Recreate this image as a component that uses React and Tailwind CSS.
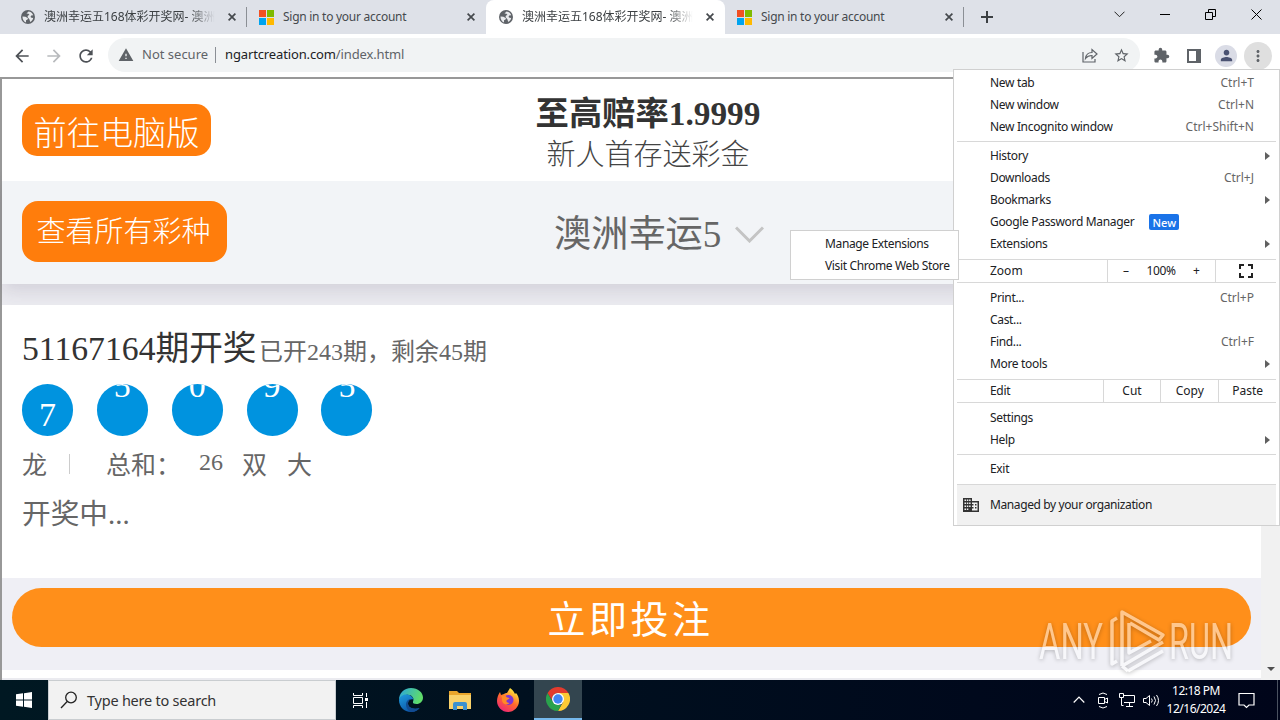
import React from 'react';
import { MdStarBorder, MdExtension, MdPerson, MdMoreVert, MdWarning, MdArrowBack, MdArrowForward, MdRefresh } from 'react-icons/md';

const tabs = [
  { title: '澳洲幸运五168体彩开奖网- 澳洲幸运', icon: 'globe', divider: true },
  { title: 'Sign in to your account', icon: 'ms' },
  { title: '澳洲幸运五168体彩开奖网- 澳洲幸运', icon: 'globe', active: true },
  { title: 'Sign in to your account', icon: 'ms', divider: true },
];

const balls = ['7', '5', '0', '9', '5'];

const GlobeIcon = () => (
  <svg className="h-[14px] w-[14px]" viewBox="0 0 14 14">
    <circle cx="7" cy="7" r="7" fill="#5f6368" />
    <path d="M1.500 6.500l3 .2 2.500 1.500-.5 1.300-1.500.8v2.200C3 11.700 1.300 9.500 1.500 6.500z" fill="#e8eaed" />
    <path d="M7.500 1.500c2 .2 4 1.500 4.700 3.800l-2 .2-.7 1.500 1.500 1 1.200-.2c-.2 2-1.500 3.500-3 4.200l-.7-2.500-2-2.500.5-1.500 1.500-.5-1-1.200-2-.3 1-1z" fill="#e8eaed" />
  </svg>
);

const MicrosoftIcon = () => (
  <div className="grid h-[15px] w-[15px] shrink-0 grid-cols-2 gap-px">
    <span className="bg-[#f25022]" />
    <span className="bg-[#7fba00]" />
    <span className="bg-[#00a4ef]" />
    <span className="bg-[#ffb900]" />
  </div>
);

const CloseIcon = () => (
  <svg className="h-2 w-2 shrink-0" viewBox="0 0 8 8" stroke="#45494d" strokeWidth="1.7">
    <path d="M.6.6l6.8 6.8M7.4.6L.6 7.4" />
  </svg>
);

const Tab = ({ tab }) => (
  <div
    className={`relative flex h-[34px] w-[239px] shrink-0 items-center ${
      tab.active ? 'rounded-t-lg bg-white' : ''
    }`}
  >
    <div className="ml-[11px] flex w-[17px] shrink-0 justify-center">
      {tab.icon === 'globe' ? <GlobeIcon /> : <MicrosoftIcon />}
    </div>
    {tab.icon === 'globe' ? (
      <span className="ml-[8px] w-[171px] overflow-hidden text-[12px] whitespace-nowrap text-[#3c4043] [mask-image:linear-gradient(to_right,black_85%,transparent)]">
        {tab.title}
      </span>
    ) : (
      <span className="ml-[8px] w-[171px] text-[12px] tracking-[-0.270px] whitespace-nowrap text-[#45494d]">
        {tab.title}
      </span>
    )}
    <div className="ml-[13px]">
      <CloseIcon />
    </div>
    {tab.divider && <span className="absolute top-[7px] right-0 h-5 w-px bg-[#8b8f95]" />}
  </div>
);

const TabStrip = () => (
  <div className="flex h-[34px] items-center bg-[#dee1e8] pl-[8px]">
    {tabs.map((tab, i) => (
      <Tab key={i} tab={tab} />
    ))}
    <svg className="ml-[17px] h-3 w-3" viewBox="0 0 12 12" stroke="#3c4043" strokeWidth="2">
      <path d="M6 0v12M0 6h12" />
    </svg>
    <svg className="mb-1.5 ml-[121px] h-[7px] w-[11px]" viewBox="0 0 11 7" fill="none" stroke="#222">
      <path d="M.5.7l5 5 5-5" />
    </svg>
    <span className="mb-1.5 ml-[35px] h-px w-[10px] bg-black" />
    <svg className="mb-1.5 ml-[35px] h-[11px] w-[11px]" viewBox="0 0 11 11" fill="none" stroke="#000">
      <path d="M.5 3.500h7v7h-7zM3.500 3V.5h7v7H8" />
    </svg>
    <svg className="mb-1.5 ml-[35px] h-[11px] w-[11px]" viewBox="0 0 11 11" stroke="#000">
      <path d="M.5.5l10 10M10.500.5l-10 10" />
    </svg>
  </div>
);

const Toolbar = () => (
  <div className="flex h-[43px] items-center bg-white">
    <MdArrowBack className="ml-[12px] h-5 w-5 text-[#4d5156]" />
    <MdArrowForward className="ml-[12px] h-5 w-5 text-[#b8babd]" />
    <MdRefresh className="ml-[12px] h-5 w-5 text-[#4d5156]" />
    <div className="mb-px ml-[12px] flex h-[34px] w-[1032px] items-center rounded-full bg-[#f1f3f4]">
      <MdWarning className="ml-[10px] h-4 w-4 text-[#5f6368]" />
      <span className="ml-[8px] w-[73px] text-[13px] whitespace-nowrap text-[#5f6368]">Not secure</span>
      <span className="h-4 w-px bg-[#8b8f95]" />
      <span className="ml-[9px] text-[13px] tracking-[-0.130px] whitespace-nowrap text-[#5f6368]">
        <span className="text-[#202124]">ngartcreation.com</span>/index.html
      </span>
      <svg className="ml-auto h-[15px] w-[16px]" viewBox="0 0 16 15" fill="none" stroke="#5f6368" strokeWidth="1.2">
        <path d="M1 4v10h12v-3M3.500 10.500c.5-4 3-6 6.500-6V1.500l5 4.500-5 4.500V7.500c-3 0-5 1-6.500 3z" />
      </svg>
      <MdStarBorder className="mr-[10px] ml-[15px] h-[17px] w-[17px] text-[#5f6368]" />
    </div>
    <MdExtension className="ml-[13px] h-[17px] w-[17px] text-[#5f6368]" />
    <svg className="ml-[17px] h-[14px] w-[14px]" viewBox="0 0 14 14">
      <path d="M1 1h12v12H1z" fill="none" stroke="#5f6368" strokeWidth="2" />
      <path d="M9 0h5v14H9z" fill="#5f6368" />
    </svg>
    <div className="ml-[14px] flex h-[22px] w-[22px] items-center justify-center rounded-full bg-[#dadce6]">
      <MdPerson className="h-[17px] w-[17px] text-[#4a5272]" />
    </div>
    <div className="ml-[7px] flex h-7 w-7 items-center justify-center rounded-full bg-[#dfdfdf]">
      <MdMoreVert className="h-[18px] w-[18px] text-[#5f6368]" />
    </div>
  </div>
);

const Page = () => (
  <div className="flex h-[603px] border-t-2 border-l-2 border-[#989898] font-['Liberation_Serif','Noto_Sans_CJK_SC',serif]">
    <div className="flex w-[1259px] shrink-0 flex-col bg-[#ebebf0]">
      {/* Promo header */}
      <div className="relative z-20 flex h-[102px] shrink-0 items-center bg-white pl-[20px] whitespace-nowrap">
        <div className="flex h-[52px] w-[189px] items-center justify-center rounded-[15px] bg-[#ff7d0c] pt-[7px] text-[33.200px] font-light text-white">
          前往电脑版
        </div>
        <div className="ml-[315px] flex w-[244px] flex-col items-center pt-[7px]">
          <span className="text-[33.300px] leading-[42px] font-bold text-[#333]">至高赔率1.9999</span>
          <span className="text-[29px] leading-[40px] font-light text-[#444]">新人首存送彩金</span>
        </div>
      </div>

      {/* Lottery selector */}
      <div className="z-10 flex h-[103px] shrink-0 items-center bg-[#f2f4f7] pl-[20px] whitespace-nowrap shadow-[0_6px_18px_rgba(60,50,80,0.15)]">
        <div className="mb-[2px] flex h-[61px] w-[205px] items-center justify-center rounded-[16px] bg-[#ff7d0c] pt-[2px] pr-[2px] text-[29px] font-light text-white">
          查看所有彩种
        </div>
        <span className="mt-[4px] ml-[327px] w-[168px] text-[37.200px] text-[#666]">澳洲幸运5</span>
        <svg className="mt-[3px] ml-[13px] h-[17px] w-[29px]" viewBox="0 0 29 17" fill="none" stroke="#c4c4c4" strokeWidth="3">
          <path d="M1 1.500l13.500 13.500L28 1.500" />
        </svg>
      </div>

      {/* Draw result */}
      <div className="relative z-20 mt-[21px] flex h-[273px] shrink-0 flex-col bg-white pl-[20px] whitespace-nowrap">
        <div className="mt-[22px] flex h-[44px] items-baseline">
          <span className="w-[237px] text-[33.700px] leading-[44px] text-[#333]">51167164期开奖</span>
          <span className="text-[24px] leading-[44px] text-[#666]">已开243期，剩余45期</span>
        </div>
        <div className="mt-[13px] flex gap-[23.850px]">
          {balls.map((n, i) => (
            <div
              key={i}
              className={`h-[52px] w-[51px] overflow-hidden rounded-full bg-[#0093df] text-center text-[34px] text-white ${
                i === 0 ? 'leading-[62px]' : 'leading-[3px]'
              }`}
            >
              {n}
            </div>
          ))}
        </div>
        <div className="mt-[11px] flex h-[38px] items-center text-[25px] text-[#666]">
          <span className="w-[47px]">龙</span>
          <span className="mb-1 h-5 w-px bg-[#ccc]" />
          <span className="ml-[36px] w-[93px]">总和：</span>
          <span className="mb-2 w-[43px] text-[24px]">26</span>
          <span className="w-[45px]">双</span>
          <span>大</span>
        </div>
        <div className="mt-[8px] text-[28.700px] leading-[42px] text-[#666]">开奖中...</div>
      </div>

      {/* Bet button */}
      <div className="flex h-[92px] shrink-0 items-start bg-[#efeff5] px-[10px] pt-[10px]">
        <div className="flex h-[59px] w-full items-center justify-center rounded-full bg-[#ff8f1a] pt-[5px] pr-[2px] text-[38px] tracking-[3.500px] text-white">
          立即投注
        </div>
      </div>
      <div className="h-[8px] shrink-0 bg-white" />
    </div>
    <div className="flex flex-1 flex-col items-center justify-end bg-[#f1f1f1] pb-[9px]">
      <span className="border-x-4 border-t-4 border-x-transparent border-t-[#505050]" />
    </div>
  </div>
);

const MenuItem = ({ label, shortcut, arrow, badge }) => (
  <div className="flex h-[22px] items-center pl-[36px]">
    <span className="tracking-[-0.330px]">{label}</span>
    {badge && (
      <span className="ml-[15px] flex h-4 w-[30px] items-center justify-center rounded-[2px] bg-[#1a73e8] text-[11px] font-medium text-white">
        {badge}
      </span>
    )}
    {shortcut && <span className="mr-[25px] ml-auto text-[#666]">{shortcut}</span>}
    {arrow && (
      <span className="mr-[9px] ml-auto border-y-4 border-l-5 border-y-transparent border-l-[#606060]" />
    )}
  </div>
);

const Separator = () => <div className="mx-[3px] my-[3px] h-px shrink-0 bg-[#d8d8d8]" />;

const BuildingIcon = () => (
  <svg className="h-[14px] w-[16px]" viewBox="0 0 16 14" fill="#333">
    <path
      fillRule="evenodd"
      d="M0 0h9v3h7v11H0zM1.500 1.500v1.500H3V1.500zm2.300 0v1.500h1.500V1.500zm2.300 0v1.500h1.500V1.500zM1.500 4.500V6H3V4.500zm2.300 0V6h1.500V4.500zm2.300 0V6h1.500V4.500zM1.500 7.500V9H3V7.500zm2.300 0V9h1.500V7.500zm2.300 0V9h1.500V7.500zM1.500 10.500V12H3v-1.500zm2.300 0V12h1.500v-1.500zM9 4.500V6h1.500v1.500H9V9h1.500v1.500H9v2h5.500v-8zM12 6h1.500v1.500H12zm0 3h1.500v1.500H12z"
    />
  </svg>
);

const ChromeMenu = () => (
  <div className="absolute top-[69px] left-[953px] z-30 flex h-[457px] w-[327px] flex-col border border-[#d0d0d0] bg-white pt-[2px] text-[12px] leading-none whitespace-nowrap text-[#202124]">
    <MenuItem label="New tab" shortcut="Ctrl+T" />
    <MenuItem label="New window" shortcut="Ctrl+N" />
    <MenuItem label="New Incognito window" shortcut="Ctrl+Shift+N" />
    <Separator />
    <MenuItem label="History" arrow />
    <MenuItem label="Downloads" shortcut="Ctrl+J" />
    <MenuItem label="Bookmarks" arrow />
    <MenuItem label="Google Password Manager" badge="New" />
    <MenuItem label="Extensions" arrow />
    <div className="mx-[3px] my-[4px] flex h-6 shrink-0 items-center border-y border-[#d8d8d8] pl-[33px]">
      <span className="w-[117px]">Zoom</span>
      <div className="flex h-full w-[109px] items-center justify-between border-x border-[#d8d8d8] px-[15px]">
        <span>–</span>
        <span className="tracking-[-0.300px]">100%</span>
        <span>+</span>
      </div>
      <svg className="ml-[23px] h-[14px] w-[14px]" viewBox="0 0 14 14" fill="none" stroke="#222" strokeWidth="2">
        <path d="M1 5V1h4M9 1h4v4M13 9v4H9M5 13H1V9" />
      </svg>
    </div>
    <MenuItem label="Print..." shortcut="Ctrl+P" />
    <MenuItem label="Cast..." />
    <MenuItem label="Find..." shortcut="Ctrl+F" />
    <MenuItem label="More tools" arrow />
    <div className="mx-[3px] my-[4px] flex h-6 shrink-0 items-center border-y border-[#d8d8d8] pl-[33px]">
      <span className="w-[113px] tracking-[-0.300px]">Edit</span>
      {['Cut', 'Copy', 'Paste'].map((action) => (
        <span key={action} className="flex h-full w-[58px] items-center justify-center border-l border-[#d8d8d8]">
          {action}
        </span>
      ))}
    </div>
    <MenuItem label="Settings" />
    <MenuItem label="Help" arrow />
    <Separator />
    <MenuItem label="Exit" />
    <div className="mx-[3px] mt-[4px] flex h-[41px] items-center border-t border-[#d8d8d8] bg-[#f1f1f1] pl-[6px]">
      <BuildingIcon />
      <span className="ml-[11px] tracking-[-0.390px]">Managed by your organization</span>
    </div>
  </div>
);

const ExtensionsSubmenu = () => (
  <div className="absolute top-[230px] left-[790px] z-40 flex h-[50px] w-[169px] flex-col border border-[#d0d0d0] bg-white pt-[2px] text-[12px] leading-none tracking-[-0.360px] whitespace-nowrap text-[#202124]">
    <div className="flex h-[22px] items-center pl-[34px]">Manage Extensions</div>
    <div className="flex h-[22px] items-center pl-[34px]">Visit Chrome Web Store</div>
  </div>
);

const EdgeIcon = () => (
  <svg className="h-6 w-6" viewBox="0 0 24 24">
    <defs>
      <linearGradient id="edgeTop" x1="0" y1="0" x2="1" y2="0.3">
        <stop offset="0" stopColor="#2aa5df" />
        <stop offset="1" stopColor="#5fdc6a" />
      </linearGradient>
      <linearGradient id="edgeBody" x1="0" y1="0" x2="0.6" y2="1">
        <stop offset="0" stopColor="#1f9de0" />
        <stop offset="1" stopColor="#0b52a4" />
      </linearGradient>
    </defs>
    <path d="M0 12C0 5 5 0 12 0c7 0 12 4.500 12 9.500 0 4-3 6.500-6.500 6.500-2.500 0-4-1-3.500-2.300 2-4.700-3-7.700-7-6.700C3 8 .8 10 0 12z" fill="url(#edgeTop)" />
    <path d="M0 12c.8-3.500 4-6 8-5.500 3.500.3 6 2.500 6.500 5-3-1-5.500.5-5.500 4 0 4 5 6.500 11.500 4.500C18.500 22.500 15.500 24 12 24 5 24 0 18.500 0 12z" fill="url(#edgeBody)" />
    <path d="M9 15.500c0 4 5 6.500 11.500 4.500-2.500 3.500-6 4-8.500 4-4-1.500-6-6.500-4.500-10C8 12 10 10.500 14 11c-2.500 0-5 1.500-5 4.500z" fill="#124b91" />
  </svg>
);

const FolderIcon = () => (
  <svg className="h-[19px] w-[22px]" viewBox="0 0 22 19">
    <path d="M0 0h8l2 2h12v16H0z" fill="#e9a62c" />
    <path d="M0 4h22v14H0z" fill="#f9d26a" />
    <path d="M4 19v-6q0-2 2-2h10q2 0 2 2v6h-4v-4H8v4z" fill="#3b91cf" />
  </svg>
);

const FirefoxIcon = () => (
  <svg className="h-6 w-6" viewBox="0 0 24 24">
    <defs>
      <linearGradient id="foxFire" x1="0.8" y1="0" x2="0.2" y2="1">
        <stop offset="0.1" stopColor="#ffe03b" />
        <stop offset="0.5" stopColor="#ff6a2b" />
        <stop offset="1" stopColor="#ee207b" />
      </linearGradient>
    </defs>
    <path d="M14 0c3 2 4 4 5 6l1-1c2 2 3 5 3 8 0 6-5 11-11 11S1 19 1 13c0-3 1-6 3-9l1 3 3-1c1-1 2-1 3-1 1-2 2-3 3-5z" fill="url(#foxFire)" />
    <circle cx="12.500" cy="12" r="5" fill="#7c35d4" />
    <path d="M5 8c3-1 5 0 6 1.500 1 0 2 0 2.500 1-1 1-2.500 1-3 2-.5 1.500 1 2.500 3 2.500-3 3-7.500 1-7.500-3 0-2 0-3-1-4z" fill="#ff8a26" />
  </svg>
);

const ChromeIcon = () => (
  <svg className="h-6 w-6" viewBox="0 0 24 24">
    <path d="M12 6h10.400A12 12 0 0 1 12 24l5.200-9z" fill="#fcc934" />
    <path d="M1.600 6l5.200 9 5.200 3 3 0-3 6A12 12 0 0 1 1.600 6z" fill="#2aa24c" />
    <path d="M1.600 6A12 12 0 0 1 22.400 6H12a6 6 0 0 0-5.800 4.500L6 13z" fill="#e33b2e" />
    <circle cx="12" cy="12" r="6" fill="#fff" />
    <circle cx="12" cy="12" r="4.700" fill="#4285f4" />
  </svg>
);

const Taskbar = () => (
  <div className="flex h-[40px] items-center bg-linear-to-r from-[#001822] to-[#00051a] text-white">
    <div className="flex w-[48px] justify-center">
      <svg className="h-4 w-4" viewBox="0 0 16 16" fill="#fff">
        <path d="M0 2.300L7 1.300V7.600H0zM8 1.200L16 0v7.600H8zM0 8.500h7v6.200l-7-1zM8 8.500h8V16l-8-1.200z" />
      </svg>
    </div>
    <div className="flex h-full w-[288px] items-center border border-[#c9cdd0] bg-[#f2f2f2] text-[#333]">
      <svg className="ml-[11px] h-[18px] w-[18px]" viewBox="0 0 18 18" fill="none" stroke="#222" strokeWidth="1.3">
        <circle cx="11" cy="6.500" r="5.300" />
        <path d="M7.200 10.500L1 17" />
      </svg>
      <span className="ml-[9px] pt-[2px] text-[14.500px] tracking-[-0.230px] whitespace-nowrap">Type here to search</span>
    </div>
    <div className="flex w-[48px] justify-center">
      <svg className="h-[17px] w-[17px]" viewBox="0 0 17 17" fill="none" stroke="#fff">
        <path d="M1.500 1v2.500h9V1M1.500 16v-2.500h9V16M1.500 5.500h9v6h-9zM14.500 1v4M14.500 10v6" />
        <path d="M13 6h3v3h-3z" fill="#fff" stroke="none" />
      </svg>
    </div>
    <div className="flex w-[54px] justify-center"><EdgeIcon /></div>
    <div className="flex w-[44px] justify-center"><FolderIcon /></div>
    <div className="flex w-[52px] justify-center"><FirefoxIcon /></div>
    <div className="flex h-full w-[48px] items-center justify-center border-b-2 border-[#76b9ed] bg-[#33454f]">
      <ChromeIcon />
    </div>
    <svg className="ml-auto h-[8px] w-[12px]" viewBox="0 0 12 8" fill="none" stroke="#fff" strokeWidth="1.2">
      <path d="M.7 6.500L6 1.200l5.300 5.300" />
    </svg>
    <svg className="ml-[12px] h-[17px] w-[12px]" viewBox="0 0 12 17" fill="none" stroke="#fff">
      <path d="M2 2.500q4-3 8 0M2 14.500q4 3 8 0M1.500 5.500h6v6h-6zM7.500 7.500l3-1.500v5l-3-1.500" />
    </svg>
    <svg className="ml-[10px] h-[14px] w-[16px]" viewBox="0 0 16 14" fill="none" stroke="#fff">
      <path d="M5 2.500h10.500v7H5M10.500 9.500v3.500M7 13.500h7M.5.500h4v4h-4zM2.500 4.500v8h2" />
    </svg>
    <svg className="ml-[8px] h-[13px] w-[17px]" viewBox="0 0 17 13" fill="none" stroke="#fff">
      <path d="M.5 4.500H3l3.500-3v10L3 8.500H.5zM8.500 4.500q1.500 2 0 4M11 2.500q3 4 0 8M13.500 1q4 5.500 0 11" />
    </svg>
    <div className="ml-[6px] flex w-[60px] flex-col items-center text-[12px] leading-[18px] tracking-[-0.500px] whitespace-nowrap">
      <span>12:18 PM</span>
      <span>12/16/2024</span>
    </div>
    <svg className="mr-[22px] ml-[12px] h-[17px] w-[17px]" viewBox="0 0 17 17" fill="none" stroke="#fff" strokeWidth="1.200">
      <path d="M1 1.500h15v11.500h-5L8.500 15.500 6 13H1z" />
    </svg>
    <span className="mr-[2px] h-full w-px bg-[#4a5260]" />
  </div>
);

const Watermark = () => (
  <svg className="absolute top-[606px] left-[1034px] z-20 h-[68px] w-[204px] opacity-50 drop-shadow-[0_1px_2px_rgba(0,0,0,0.5)]" viewBox="0 0 204 68">
    <g fill="#fff" fontFamily="Roboto, sans-serif" fontSize="50">
      <text x="5" y="53" textLength="64" lengthAdjust="spacingAndGlyphs">ANY</text>
      <text x="135" y="53" textLength="64" lengthAdjust="spacingAndGlyphs">RUN</text>
    </g>
    <g fill="none" stroke="#fff" strokeWidth="3.500" strokeLinejoin="round">
      <path d="M83 12l-5 3v43l5-3" />
      <path d="M88 60V6l41 23-4 5-29-17M88 60l41-24M94 65l35-20M88 60l6 5M95 17v30l22-12" />
    </g>
  </svg>
);

const App = () => {
  return (
    <div className="relative h-[720px] w-[1280px] overflow-hidden bg-white font-['Noto_Sans','Noto_Sans_CJK_SC',sans-serif]">
      <TabStrip />
      <Toolbar />
      <Page />
      <Taskbar />
      <ExtensionsSubmenu />
      <ChromeMenu />
      <Watermark />
    </div>
  );
};

export default App;
